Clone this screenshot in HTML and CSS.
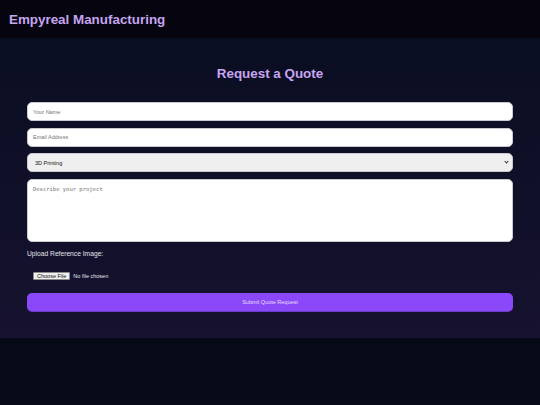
FILE: index.html
```html
<!DOCTYPE html>
<html lang="en">
<head>
    <meta charset="UTF-8">
    <meta name="viewport" content="width=device-width, initial-scale=1.0">
    <title>Empyreal Manufacturing - Request a Quote</title>
    <link rel="stylesheet" href="styles.css">
</head>
<body>
    <header class="site-header">
        <h1>Empyreal Manufacturing</h1>
    </header>

    <section class="quote-section">
        <h2>Request a Quote</h2>
        <form class="quote-form" id="quoteForm">
            <input type="text" placeholder="Your Name" required>
            <input type="email" placeholder="Email Address" required>
            <div class="select-wrap">
                <select>
                    <option>3D Printing</option>
                    <option>CNC Machining</option>
                    <option>Laser Cutting</option>
                </select>
            </div>
            <textarea placeholder="Describe your project"></textarea>
            <label class="upload-label" for="refImage">Upload Reference Image:</label>
            <input type="file" id="refImage" class="file-input">
            <button type="submit">Submit Quote Request</button>
        </form>
    </section>
</body>
</html>
```

FILE: styles.css
```css
body {
    margin: 0;
    font-family: "Liberation Sans", Arial, sans-serif;
    background-color: #060a17;
    color: #e6e6ee;
}
.site-header {
    background: #05040f;
    height: 38px;
    padding: 0 9px;
    display: flex;
    align-items: center;
    box-sizing: border-box;
}
.site-header h1 {
    margin: 0;
    font-size: 13.4px;
    color: #c7a4ef;
}
.quote-section {
    background: linear-gradient(to bottom, #0a0e22, #16122f);
    padding: 28px 27px 27px;
}
.quote-section h2 {
    margin: 0 0 21px;
    text-align: center;
    font-size: 13.4px;
    line-height: 15px;
    color: #c9a5f0;
}
.quote-form {
    display: flex;
    flex-direction: column;
    gap: 6.5px;
}
.quote-form input,
.quote-form select,
.quote-form textarea {
    box-sizing: border-box;
    width: 100%;
    height: 19px;
    padding: 0 5px;
    border: 1px solid #c9c9d2;
    border-radius: 5px;
    background: #fff;
    font-family: "Liberation Sans", Arial, sans-serif;
    font-size: 5.5px;
    color: #111;
}
.select-wrap {
    position: relative;
}
.quote-form select {
    display: block;
    appearance: none;
    background: #efefef;
    padding: 0 7px;
}
.select-wrap::after {
    content: "";
    position: absolute;
    right: 5px;
    top: 7px;
    width: 2px;
    height: 2px;
    border-right: 1px solid #333;
    border-bottom: 1px solid #333;
    transform: rotate(45deg);
    pointer-events: none;
}
.quote-form textarea {
    height: 63px;
    padding: 6px 5px;
    font-family: "DejaVu Sans Mono", monospace;
    resize: none;
}
.upload-label {
    margin-top: 2px;
    font-size: 6.7px;
    line-height: 8px;
    color: #e4e4ec;
}
.quote-form .file-input {
    height: 22px;
    padding: 7px 6px;
    border: none;
    background: transparent;
    color: #e4e4ec;
}
.file-input::file-selector-button {
    height: 8px;
    padding: 0 3px;
    margin-right: 3px;
    border: 1px solid #8a8a8a;
    border-radius: 1px;
    background: #efefef;
    color: #111;
    font-size: 5.5px;
    line-height: 6px;
}
.quote-form button {
    height: 18px;
    border: none;
    border-radius: 5px;
    background: #8a48f8;
    box-shadow: 0 1px 0 #6a3bcc;
    color: #eadfff;
    font-family: "Liberation Sans", Arial, sans-serif;
    font-size: 5.5px;
    cursor: pointer;
}
.quote-form button:hover {
    background: #7b3ae8;
}
```
